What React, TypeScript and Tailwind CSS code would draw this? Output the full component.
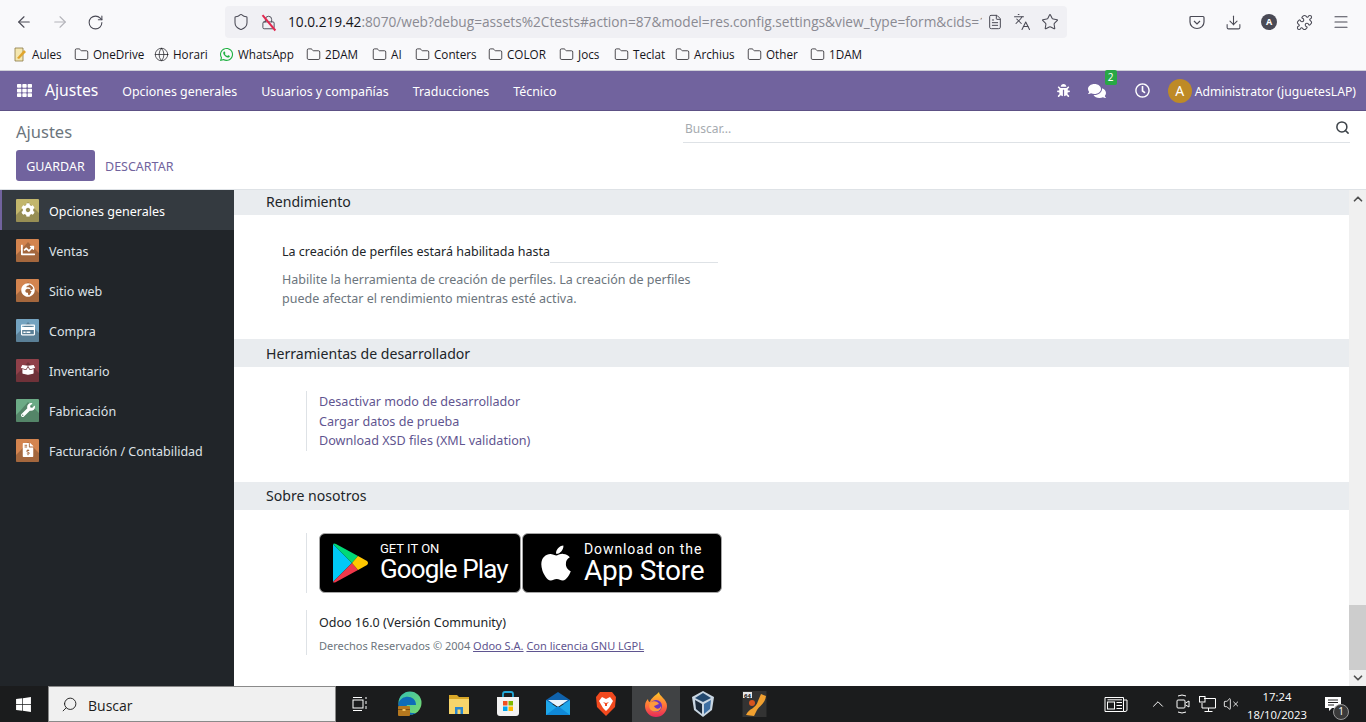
import { ArrowLeft, ArrowRight, RotateCw, Shield, Lock, FileText, Languages, Star, Download, Puzzle, Menu, Folder, Globe, ChevronUp, ChevronDown, Search, VolumeX } from 'lucide-react';
import { FaBug, FaComments, FaRegClock, FaTh, FaCog, FaChartLine, FaGlobeAfrica, FaRegCreditCard, FaBoxOpen, FaWrench, FaFileInvoiceDollar, FaWhatsapp, FaApple, FaWindows } from 'react-icons/fa';
import React from 'react';

const bookmarks = [
    { name: 'OneDrive', w: 'w-[53px] mr-[8px]' },
    { name: 'Horari', w: 'w-[33px] mr-[13px]' },
    { name: 'WhatsApp', w: 'w-[55px] mr-[13px]' },
    { name: '2DAM', w: 'w-[34px] mr-[13px]' },
    { name: 'AI', w: 'w-[11px] mr-[13px]' },
    { name: 'Conters', w: 'w-[41px] mr-[13px]' },
    { name: 'COLOR', w: 'w-[40px] mr-[12px]' },
    { name: 'Jocs', w: 'w-[23px] mr-[13px]' },
    { name: 'Teclat', w: 'w-[29px] mr-[13px]' },
    { name: 'Archius', w: 'w-[40px] mr-[13px]' },
    { name: 'Other', w: 'w-[31px] mr-[13px]' },
    { name: '1DAM', w: 'w-[32px]' },
];

const settingsApps = [
    { name: 'Opciones generales', icon: FaCog, bg: 'bg-[#c2b66c]', active: true },
    { name: 'Ventas', icon: FaChartLine, bg: 'bg-[#d3844f]' },
    { name: 'Sitio web', icon: FaGlobeAfrica, bg: 'bg-[#d3844f]' },
    { name: 'Compra', icon: FaRegCreditCard, bg: 'bg-[#74a3c0]' },
    { name: 'Inventario', icon: FaBoxOpen, bg: 'bg-[#8f4049]' },
    { name: 'Fabricación', icon: FaWrench, bg: 'bg-[#6cab86]' },
    { name: 'Facturación / Contabilidad', icon: FaFileInvoiceDollar, bg: 'bg-[#d3844f]' },
];

const SectionTitle = ({ title, className }: { title: string; className: string }) => (
    <div className={`bg-[#e9ecef] pl-[32px] text-[14.1px] text-[#212529] flex items-center ${className}`}>{title}</div>
);

const GooglePlayLogo = () => (
    <svg width="36" height="40" viewBox="0 0 36 40">
        <path d="M0 1 L19 20 L0 39 Z" fill="#00c8f5" />
        <path d="M0 1 Q1 0 3 1 L25 13 L19 20 Z" fill="#00d977" />
        <path d="M0 39 Q1 40 3 39 L25 27 L19 20 Z" fill="#f0384a" />
        <path d="M25 13 L34 18 Q36 20 34 22 L25 27 L19 20 Z" fill="#ffc800" />
    </svg>
);

const EdgeIcon = () => (
    <svg width="26" height="26" viewBox="0 0 26 26">
        <defs>
            <linearGradient id="edge" x1="0" y1="0" x2="1" y2="1">
                <stop offset="0" stopColor="#35c1b0" />
                <stop offset="1" stopColor="#7ddb6a" />
            </linearGradient>
        </defs>
        <circle cx="13" cy="12" r="11.5" fill="url(#edge)" />
        <path d="M1.5 12 C5 3 19 4 19 14 L10 14 C8 17 10 23 19 22 C11 27 0 22 1.5 12Z" fill="#0f6cb8" />
        <rect x="1" y="15" width="12" height="10" rx="1" fill="#b5781f" />
        <rect x="1" y="18" width="12" height="1" fill="#7d4f10" />
        <rect x="5.5" y="18" width="3" height="2" fill="#f0c060" />
    </svg>
);

const FilesIcon = () => (
    <svg width="24" height="24" viewBox="0 0 24 24">
        <path d="M2 3 H10 L12 5 H22 V21 H2 Z" fill="#d9a727" />
        <rect x="2" y="7" width="20" height="15" fill="#f7d56b" />
        <path d="M8 22 V15 H16 V22 H13.5 V17.5 H10.5 V22 Z" fill="#2a87d0" />
    </svg>
);

const StoreIcon = () => (
    <svg width="24" height="26" viewBox="0 0 24 26">
        <path d="M7 7 V3 Q7 1 9 1 H15 Q17 1 17 3 V7" fill="none" stroke="#20a8d8" strokeWidth="1.8" />
        <path d="M1 6 H23 V22 Q23 25 20 25 H4 Q1 25 1 22 Z" fill="#f2f2f2" />
        <rect x="7" y="10" width="4.5" height="4.5" fill="#f25022" />
        <rect x="12.5" y="10" width="4.5" height="4.5" fill="#7fba00" />
        <rect x="7" y="15.5" width="4.5" height="4.5" fill="#00a4ef" />
        <rect x="12.5" y="15.5" width="4.5" height="4.5" fill="#ffb900" />
    </svg>
);

const MailIcon = () => (
    <svg width="26" height="24" viewBox="0 0 26 24">
        <path d="M1 8 L13 0 L25 8 V12 H1 Z" fill="#0f62ac" />
        <path d="M3 8 H23 L13 15 Z" fill="#eaf4fb" />
        <path d="M1 8 L13 16 L25 8 V23 H1 Z" fill="#1ea7ea" />
        <path d="M1 23 L13 14 L25 23 Z" fill="#0f88d8" />
    </svg>
);

const BraveIcon = () => (
    <svg width="22" height="26" viewBox="0 0 22 26">
        <path d="M5 1 H17 L21 6 L20 16 L11 25 L2 16 L1 6 Z" fill="#f1491e" />
        <path d="M7 6 L11 8 L15 6 L18 10 L14 17 L11 20 L8 17 L4 10 Z" fill="#fff" />
        <path d="M8 11 L10 13 L10 15 L12 15 L12 13 L14 11 L11 12 Z" fill="#f1491e" />
    </svg>
);

const FirefoxIcon = () => (
    <svg width="24" height="26" viewBox="0 0 24 26">
        <defs>
            <linearGradient id="fx" x1="0.5" y1="0" x2="0.5" y2="1">
                <stop offset="0" stopColor="#ffc928" />
                <stop offset="0.55" stopColor="#ff7139" />
                <stop offset="1" stopColor="#e8275b" />
            </linearGradient>
        </defs>
        <path d="M15 1 C15 5 23 8 23 15 A11 11 0 1 1 1 15 C1 11 3 9 4 8 C4 10 5 11 6 11 C7 7 11 5 15 1Z" fill="url(#fx)" />
        <circle cx="12" cy="15" r="6" fill="#6a34c0" />
        <path d="M6 12 C9 9 14 10 15 13 C13 14 12 14 10 15 C12 19 16 18 17 15 C18 20 10 23 6 18 C5 16 5 14 6 12Z" fill="#ff9a3c" />
    </svg>
);

const VBoxIcon = () => (
    <svg width="24" height="28" viewBox="0 0 24 28">
        <path d="M12 1 L23 7 L21 20 L12 27 L3 20 L1 7 Z" fill="#c9d6e2" />
        <path d="M12 3 L20 8 L12 12 L4 8 Z" fill="#24496f" />
        <path d="M4 10 L11 14 V24 L5 19 Z" fill="#1c2a3a" />
        <path d="M20 10 L13 14 V24 L19 19 Z" fill="#3e6fa3" />
    </svg>
);

const SevenIcon = () => (
    <svg width="25" height="28" viewBox="0 0 25 28">
        <rect x="0.5" y="1" width="24" height="26" fill="#333" />
        <rect x="1" y="2" width="9" height="6" fill="#e8e8e8" />
        <text x="2" y="7.5" fontSize="6" fontWeight="700" fill="#111">64</text>
        <circle cx="10" cy="13" r="3" fill="#d8541e" />
        <path d="M4 25 C7 18 14 19 16 11 L19 4 L24 6 C23 14 18 15 15 20 L12 26 Z" fill="#f0a030" />
    </svg>
);

const NewsIcon = () => (
    <svg width="24" height="17" viewBox="0 0 24 17" fill="none" stroke="#fff" strokeWidth="1">
        <path d="M1 1.5 H19.5 V15.5 H1 Z" />
        <path d="M19.5 4 H23 V14 Q23 15.5 21 15.5 H19.5" />
        <rect x="3.5" y="6" width="7" height="7" />
        <path d="M12.5 6.5 H18 M12.5 9.5 H18 M12.5 12.5 H18 M3.5 3.8 H18" />
    </svg>
);

const CamIcon = () => (
    <svg width="14" height="20" viewBox="0 0 14 20" fill="none" stroke="#fff" strokeWidth="1">
        <path d="M2 2 Q6 0 10 2 M2 18 Q6 20 10 18" />
        <rect x="1" y="6" width="8" height="8" rx="1" />
        <path d="M9.5 9 L13 7 V13 L9.5 11" />
    </svg>
);

const NetIcon = () => (
    <svg width="17" height="17" viewBox="0 0 17 17" fill="none" stroke="#fff" strokeWidth="1">
        <path d="M5 2.5 H16.5 V12 H3 V7" />
        <rect x="0.5" y="0.5" width="5.5" height="5.5" />
        <path d="M9.5 12 V15.5 M5.5 15.5 H13.5" />
    </svg>
);

export default function App() {
    return (
        <div className="w-[1366px] h-[722px] overflow-hidden flex flex-col bg-white font-['Noto_Sans',sans-serif] text-[12.5px] text-[#212529]">
            {/* browser chrome */}
            <div className="h-[71px] shrink-0 bg-[#f9f9fb] border-b border-[#cfcfd8] font-['Open_Sans',sans-serif]">
                <div className="h-[40px] flex items-center pt-[4px] text-[#4a4a55]">
                    <ArrowLeft className="w-[18px] h-[18px] ml-[15px]" strokeWidth={1.5} />
                    <ArrowRight className="w-[18px] h-[18px] ml-[18px] text-[#b4b4ba]" strokeWidth={1.5} />
                    <RotateCw className="w-[17px] h-[17px] ml-[18px]" strokeWidth={1.5} />
                    <div className="ml-[121px] w-[842px] h-[32px] bg-[#f0f0f4] rounded-[4px] flex items-center">
                        <Shield className="w-[18px] h-[18px] ml-[7px] shrink-0" strokeWidth={1.4} />
                        <div className="relative ml-[11px] shrink-0">
                            <Lock className="w-[15px] h-[15px]" strokeWidth={1.5} />
                            <div className="absolute left-[7px] top-[-2px] h-[20px] w-[1.5px] bg-[#e22850] rotate-[-40deg]" />
                        </div>
                        <div className="ml-[12px] w-[694px] overflow-hidden whitespace-nowrap text-[13.7px] text-[#8a8a92]">
                            <span className="text-[#15141a]">10.0.219.42</span>:8070/web?debug=assets%2Ctests#action=87&amp;model=res.config.settings&amp;view_type=form&amp;cids=1
                        </div>
                        <FileText className="w-[16px] h-[16px] ml-[5px] shrink-0" strokeWidth={1.5} />
                        <Languages className="w-[18px] h-[18px] ml-[10px] shrink-0" strokeWidth={1.4} />
                        <Star className="w-[18px] h-[18px] ml-[10px] shrink-0" strokeWidth={1.4} />
                    </div>
                    <svg className="ml-[122px]" width="16" height="16" viewBox="0 0 16 16" fill="none" stroke="currentColor" strokeWidth="1.2">
                        <path d="M2 2.5 H14 Q15 2.5 15 3.5 V8 A7 6.5 0 0 1 1 8 V3.5 Q1 2.5 2 2.5Z" />
                        <path d="M5 7 L8 10 L11 7" />
                    </svg>
                    <Download className="w-[17px] h-[17px] ml-[20px]" strokeWidth={1.5} />
                    <div className="ml-[19px] w-[16px] h-[16px] rounded-full bg-[#4a4a55] text-white text-[9px] font-bold flex items-center justify-center">A</div>
                    <Puzzle className="w-[17px] h-[17px] ml-[19px]" strokeWidth={1.5} />
                    <Menu className="w-[18px] h-[18px] ml-[19px]" strokeWidth={1.5} />
                </div>
                <div className="h-[30px] flex items-center pl-[14px] text-[11.7px] text-[#15141a] pb-[1px] whitespace-nowrap">
                    <svg width="13" height="15" viewBox="0 0 13 15">
                        <path d="M1 1 H9 V14 H1 Z" fill="#f4e7b0" stroke="#8a7a45" strokeWidth="0.8" />
                        <path d="M3 11 L10 3 L12 5 L5 12 Z" fill="#e0a52c" />
                    </svg>
                    <span className="ml-[5px] mr-[13px] w-[29px]">Aules</span>
                    {bookmarks.map((b) => (
                        <div key={b.name} className="flex items-center">
                            {b.name === 'Horari' ? <Globe className="w-[15px] h-[15px]" strokeWidth={1.1} /> : b.name === 'WhatsApp' ? <FaWhatsapp className="w-[15px] h-[15px] text-[#1fb141]" /> : <Folder className="w-[15px] h-[15px]" strokeWidth={1.2} />}
                            <span className={`ml-[4px] ${b.w}`}>{b.name}</span>
                        </div>
                    ))}
                </div>
            </div>

            {/* odoo navbar */}
            <div className="h-[40px] shrink-0 bg-[#71639e] border-b border-[#5d5185] flex items-center text-white text-[12.4px]">
                <FaTh className="w-[15px] h-[15px] ml-[17px]" />
                <span className="ml-[13px] text-[15.7px]">Ajustes</span>
                <span className="ml-[24px] pt-[4px]">Opciones generales</span>
                <span className="ml-[24px] pt-[4px]">Usuarios y compañías</span>
                <span className="ml-[24px] pt-[4px]">Traducciones</span>
                <span className="ml-[24px] pt-[4px]">Técnico</span>
                <div className="ml-auto flex items-center">
                    <FaBug className="w-[13px] h-[13px]" />
                    <div className="relative ml-[18px]">
                        <FaComments className="w-[18px] h-[18px]" />
                        <span className="absolute left-[17px] top-[-12px] w-[12px] h-[15px] bg-[#28a745] rounded-[2px] text-[10px] flex items-center justify-center">2</span>
                    </div>
                    <FaRegClock className="w-[15px] h-[15px] ml-[29px]" />
                    <div className="ml-[18px] w-[24px] h-[24px] rounded-full bg-[#be8a26] flex items-center justify-center text-[14px]">A</div>
                    <span className="ml-[3px] mr-[10px] text-[12.2px] pt-[4px]">Administrator (juguetesLAP)</span>
                </div>
            </div>

            {/* control panel */}
            <div className="h-[79px] shrink-0 border-b border-[#dee2e6] flex justify-between">
                <div className="pl-[16px]">
                    <div className="mt-[9px] text-[16.5px] text-[#6c757d] leading-[24px]">Ajustes</div>
                    <div className="mt-[6px] flex items-center">
                        <div className="h-[31px] w-[79px] rounded-[3px] bg-[#71639e] text-white flex items-center justify-center pt-[3px]">GUARDAR</div>
                        <span className="ml-[10px] text-[#71639e] pt-[3px]">DESCARTAR</span>
                    </div>
                </div>
                <div className="mt-[3px] mr-[16px] w-[667px] h-[29px] border-b border-[#dee2e6] flex items-center justify-between text-[12px] text-[#a6abb0]">
                    <span className="ml-[2px] pt-[2px]">Buscar...</span>
                    <Search className="w-[15px] h-[15px] text-[#3c4248] mb-[2px]" strokeWidth={2.4} />
                </div>
            </div>

            <div className="flex-1 min-h-0 flex">
                {/* settings apps */}
                <div className="w-[234px] shrink-0 bg-[#212529] text-[#dee2e6]">
                    {settingsApps.map((app) => (
                        <div key={app.name} className={`h-[40px] flex items-center pl-[16px] ${app.active ? 'bg-[#343a40] border-l-2 border-[#71639e] !pl-[14px] text-white' : ''}`}>
                            <div className={`relative overflow-hidden w-[23px] h-[23px] shrink-0 flex items-center justify-center rounded-[1px] ${app.bg}`}>
                                <svg className="absolute inset-0" width="23" height="23" viewBox="0 0 23 23">
                                    <polygon points="0,16 0,23 23,23 23,14 12,3 4,12" fill="#000" fillOpacity="0.22" />
                                </svg>
                                <app.icon className="relative w-[14px] h-[14px] text-white" />
                            </div>
                            <span className="ml-[10px] pt-[4px]">{app.name}</span>
                        </div>
                    ))}
                </div>

                {/* form */}
                <div className="flex-1 min-w-0">
                    <SectionTitle title="Rendimiento" className="h-[25px] pb-[1px]" />
                    <div className="h-[124px] pl-[48px] pt-[25px]">
                        <div className="flex items-end h-[22px]">
                            <span>La creación de perfiles estará habilitada hasta</span>
                            <div className="w-[168px] border-b border-[#dee2e6] h-[23px] mb-[-1px] shrink-0" />
                        </div>
                        <div className="mt-[8px] w-[430px] text-[#6c757d] text-[12.5px] leading-[19px]">Habilite la herramienta de creación de perfiles. La creación de perfiles puede afectar el rendimiento mientras esté activa.</div>
                    </div>
                    <SectionTitle title="Herramientas de desarrollador" className="h-[28px] pt-[1px]" />
                    <div className="h-[115px] pl-[72px] pt-[24px]">
                        <div className="border-l border-[#dee2e6] pl-[12px] h-[60px] pt-[1px] text-[#5f5590] leading-[19.5px] text-[12.6px]">
                            <div>Desactivar modo de desarrollador</div>
                            <div>Cargar datos de prueba</div>
                            <div>Download XSD files (XML validation)</div>
                        </div>
                    </div>
                    <SectionTitle title="Sobre nosotros" className="h-[28px]" />
                    <div className="pl-[72px] pt-[23px]">
                        <div className="border-l border-[#dee2e6] pl-[12px] h-[60px] flex gap-[1px]">
                            <div className="w-[202px] h-[60px] bg-black rounded-[6px] border border-[#a6a6a6] flex items-center pl-[13px] text-white">
                                <GooglePlayLogo />
                                <div className="ml-[11px] font-['Roboto',sans-serif]">
                                    <div className="text-[13px] leading-[13px]">GET IT ON</div>
                                    <div className="text-[26px] leading-[29px] tracking-[-0.9px] whitespace-nowrap">Google Play</div>
                                </div>
                            </div>
                            <div className="w-[200px] h-[60px] bg-black rounded-[6px] border border-[#a6a6a6] flex items-center pl-[15px] text-white">
                                <FaApple className="w-[36px] h-[40px]" />
                                <div className="ml-[10px] font-['Roboto',sans-serif]">
                                    <div className="text-[14px] leading-[14px] tracking-[0.9px] whitespace-nowrap">Download on the</div>
                                    <div className="text-[28px] leading-[29px] tracking-[-0.2px] whitespace-nowrap">App Store</div>
                                </div>
                            </div>
                        </div>
                        <div className="mt-[17px] border-l border-[#dee2e6] pl-[12px] h-[45px]">
                            <div className="pt-[4px] leading-[18px]">Odoo 16.0 (Versión Community)</div>
                            <div className="mt-[5px] text-[11px] leading-[17px] text-[#6c757d]">
                                Derechos Reservados © 2004 <span className="text-[#5f5590] underline">Odoo S.A.</span> <span className="text-[#5f5590] underline">Con licencia GNU LGPL</span>
                            </div>
                        </div>
                    </div>
                </div>

                {/* scrollbar */}
                <div className="w-[17px] shrink-0 bg-[#f0f0f0] flex flex-col items-center justify-between text-[#505050]">
                    <ChevronUp className="w-[14px] h-[14px] mt-[2px]" strokeWidth={3} />
                    <div className="flex-1 w-full flex flex-col justify-end">
                        <div className="w-full h-[65px] bg-[#cdcdcd]" />
                    </div>
                    <ChevronDown className="w-[14px] h-[14px] my-[1px]" strokeWidth={3} />
                </div>
            </div>

            {/* windows taskbar */}
            <div className="h-[36px] shrink-0 bg-[#1b1c1d] flex items-center text-white font-['Open_Sans',sans-serif]">
                <FaWindows className="w-[17px] h-[17px] ml-[15px]" />
                <div className="ml-[16px] w-[288px] h-[36px] bg-[#f0f0f0] border border-[#8a8a8a] flex items-center text-[#1c1c1c]">
                    <Search className="w-[17px] h-[17px] ml-[12px] scale-x-[-1]" strokeWidth={1.3} />
                    <span className="ml-[10px] text-[14px] pt-[2px]">Buscar</span>
                </div>
                <svg className="ml-[16px]" width="16" height="16" viewBox="0 0 16 16" fill="none" stroke="#fff" strokeWidth="1">
                    <path d="M1 1.5 H10 M1 14.5 H10" />
                    <rect x="1" y="4" width="10" height="8" />
                    <path d="M14 1 V3 M14 5 V8 M14 10 V13" />
                </svg>
                <div className="ml-[29px] flex items-center"><EdgeIcon /></div>
                <div className="ml-[24px] flex items-center"><FilesIcon /></div>
                <div className="ml-[25px] flex items-center"><StoreIcon /></div>
                <div className="ml-[25px] flex items-center"><MailIcon /></div>
                <div className="ml-[24px] flex items-center"><BraveIcon /></div>
                <div className="ml-[15px] w-[48px] h-[36px] bg-[#404244] flex items-center justify-center"><FirefoxIcon /></div>
                <div className="ml-[11px] flex items-center"><VBoxIcon /></div>
                <div className="ml-[27px] flex items-center"><SevenIcon /></div>
                <div className="ml-auto flex items-center">
                    <NewsIcon />
                    <ChevronUp className="w-[18px] h-[18px] ml-[21px]" strokeWidth={1.3} />
                    <div className="ml-[9px]"><CamIcon /></div>
                    <div className="ml-[9px]"><NetIcon /></div>
                    <VolumeX className="w-[16px] h-[16px] ml-[7px]" strokeWidth={1.3} />
                    <div className="ml-[5px] w-[66px] text-center text-[11.3px] leading-[18px] pt-[3px]">
                        <div>17:24</div>
                        <div>18/10/2023</div>
                    </div>
                    <div className="relative ml-[15px] mr-[24px]">
                        <svg width="17" height="17" viewBox="0 0 17 17">
                            <path d="M0 1 H16 V12 H7 L4 15 V12 H0 Z" fill="#fff" />
                            <path d="M3 4 H13 M3 6.5 H13 M3 9 H9" stroke="#222" strokeWidth="1" />
                        </svg>
                        <span className="absolute left-[8px] top-[8px] w-[16px] h-[16px] rounded-full bg-[#3a3a3a] border border-[#999] text-[10px] flex items-center justify-center">1</span>
                    </div>
                </div>
            </div>
        </div>
    );
}
